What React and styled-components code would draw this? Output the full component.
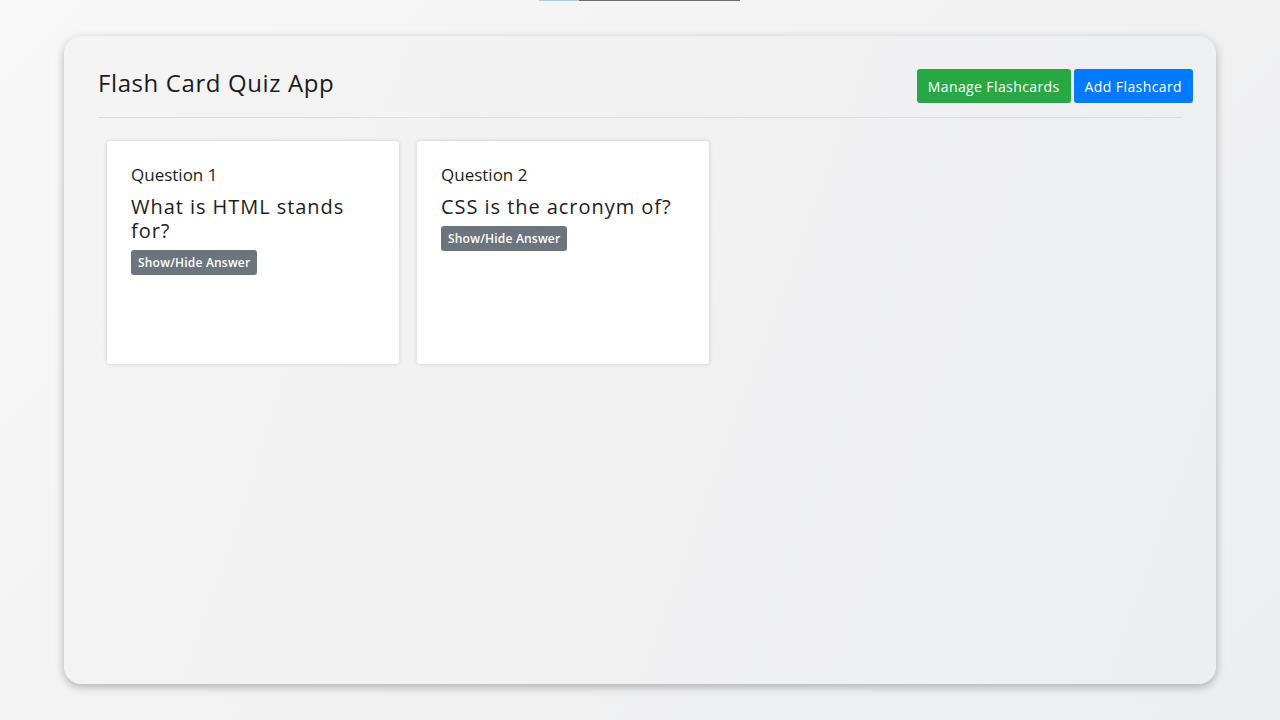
import React from "react";
import styled, { createGlobalStyle } from "styled-components";

const GlobalStyle = createGlobalStyle`
  html, body {
    margin: 0;
    padding: 0;
  }
  body {
    font-family: "Open Sans", "Noto Sans", sans-serif;
    color: #212529;
    background: linear-gradient(135deg, #f9f8f8 0%, #f1f1f2 60%, #eceef0 100%);
    min-height: 720px;
  }
  * { box-sizing: border-box; }
`;

const Page = styled.div`
  position: relative;
  width: 1280px;
  height: 720px;
  padding: 36px 64px;
`;

const Progress = styled.div`
  position: absolute;
  top: 0;
  left: 539px;
  width: 201px;
  height: 1px;
  background: #6b6b6b;
  overflow: hidden;
`;

const ProgressFill = styled.div`
  height: 100%;
  background: #9fd4e6;
`;

const Container = styled.main`
  height: 648px;
  border-radius: 18px;
  background: linear-gradient(110deg, #f4f4f4 0%, #f1f1f2 50%, #edeef0 100%);
  box-shadow: 0 3px 10px rgba(0, 0, 0, 0.28);
  padding: 33px 34px 0 34px;
`;

const Header = styled.header`
  display: flex;
  justify-content: space-between;
  align-items: flex-start;
  height: 49px;
  border-bottom: 1px solid #dcdcdc;
`;

const Title = styled.h1`
  margin: 0;
  font-size: 24px;
  font-weight: 400;
  line-height: 28px;
  letter-spacing: 0.6px;
  color: #1c1c1c;
`;

const ButtonGroup = styled.div`
  display: flex;
  gap: 3px;
  margin-right: -11px;
`;

const Button = styled.button`
  height: 34px;
  padding: 0 11px;
  border: none;
  border-radius: 3px;
  font-family: inherit;
  font-size: 14px;
  font-weight: 500;
  letter-spacing: 0.4px;
  color: #fff;
  background: ${(p) => p.$bg};
  cursor: pointer;
`;

const Cards = styled.section`
  display: flex;
  gap: 18px;
  padding: 23px 9px;
`;

const Card = styled.article`
  width: 292px;
  height: 223px;
  background: #fff;
  border-radius: 3px;
  box-shadow: 0 0 4px rgba(0, 0, 0, 0.16);
  padding: 22px 24px;
`;

const Label = styled.div`
  font-size: 17px;
  line-height: 24px;
  color: #1c1c1c;
`;

const Question = styled.div`
  margin-top: 8px;
  font-size: 20px;
  line-height: 24px;
  letter-spacing: 0.95px;
  color: #1c1c1c;
`;

const SmallButton = styled.button`
  margin-top: 7px;
  height: 25px;
  padding: 0 7px;
  border: none;
  border-radius: 3px;
  font-family: inherit;
  font-size: 12px;
  font-weight: 600;
  letter-spacing: 0.2px;
  color: #fff;
  background: #6c757d;
`;

const cards = [
  { n: 1, q: "What is HTML stands for?" },
  { n: 2, q: "CSS is the acronym of?" },
];

export default function App() {
  return (
    <>
      <GlobalStyle />
      <Page>
        <Progress>
          <ProgressFill style={{ width: "20%" }} />
        </Progress>
        <Container>
          <Header>
            <Title>Flash Card Quiz App</Title>
            <ButtonGroup>
              <Button $bg="#28a745">Manage Flashcards</Button>
              <Button $bg="#007bff">Add Flashcard</Button>
            </ButtonGroup>
          </Header>
          <Cards>
            {cards.map((c) => (
              <Card key={c.n}>
                <Label>Question {c.n}</Label>
                <Question>{c.q}</Question>
                <SmallButton>Show/Hide Answer</SmallButton>
              </Card>
            ))}
          </Cards>
        </Container>
      </Page>
    </>
  );
}
